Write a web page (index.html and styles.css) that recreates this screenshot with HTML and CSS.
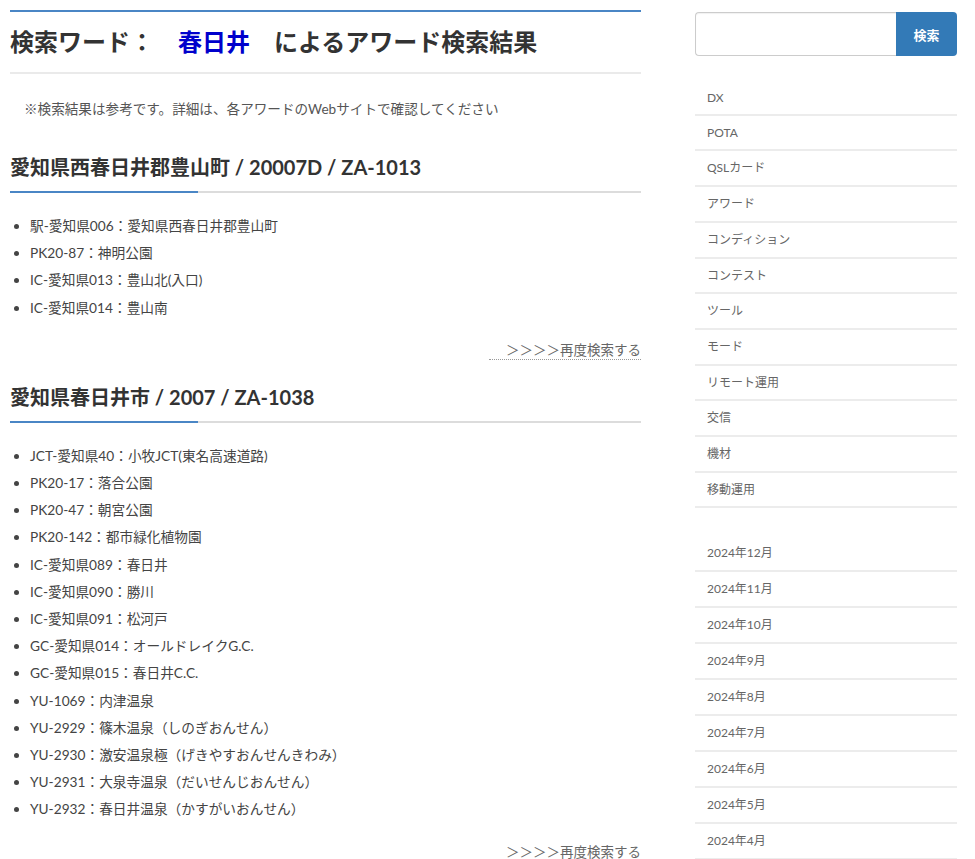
FILE: index.html
```html
<!DOCTYPE html>
<html lang="ja">
<head>
<meta charset="utf-8">
<title>アワード検索結果</title>
<link rel="stylesheet" href="styles.css">
</head>
<body>
<div class="page">
  <main class="main">
    <h1 class="title">検索ワード：　<span class="word">春日井</span>　によるアワード検索結果</h1>
    <p class="note">※検索結果は参考です。詳細は、各アワードのWebサイトで確認してください</p>

    <section class="result">
      <h2 class="result-title">愛知県西春日井郡豊山町 / 20007D / ZA-1013</h2>
      <ul class="items">
        <li>駅-愛知県006：愛知県西春日井郡豊山町</li>
        <li>PK20-87：神明公園</li>
        <li>IC-愛知県013：豊山北(入口)</li>
        <li>IC-愛知県014：豊山南</li>
      </ul>
      <div class="again"><a class="again-link" href="#">＞＞＞＞再度検索する</a></div>
    </section>

    <section class="result">
      <h2 class="result-title">愛知県春日井市 / 2007 / ZA-1038</h2>
      <ul class="items">
        <li>JCT-愛知県40：小牧JCT(東名高速道路)</li>
        <li>PK20-17：落合公園</li>
        <li>PK20-47：朝宮公園</li>
        <li>PK20-142：都市緑化植物園</li>
        <li>IC-愛知県089：春日井</li>
        <li>IC-愛知県090：勝川</li>
        <li>IC-愛知県091：松河戸</li>
        <li>GC-愛知県014：オールドレイクG.C.</li>
        <li>GC-愛知県015：春日井C.C.</li>
        <li>YU-1069：内津温泉</li>
        <li>YU-2929：篠木温泉（しのぎおんせん）</li>
        <li>YU-2930：激安温泉極（げきやすおんせんきわみ）</li>
        <li>YU-2931：大泉寺温泉（だいせんじおんせん）</li>
        <li>YU-2932：春日井温泉（かすがいおんせん）</li>
      </ul>
      <div class="again"><a class="again-link" href="#">＞＞＞＞再度検索する</a></div>
    </section>
  </main>

  <aside class="sidebar">
    <form class="search">
      <input class="search-input" type="text">
      <button class="search-btn" type="button">検索</button>
    </form>
    <ul class="menu">
      <li><a href="#">DX</a></li>
      <li><a href="#">POTA</a></li>
      <li><a href="#">QSLカード</a></li>
      <li><a href="#">アワード</a></li>
      <li><a href="#">コンディション</a></li>
      <li><a href="#">コンテスト</a></li>
      <li><a href="#">ツール</a></li>
      <li><a href="#">モード</a></li>
      <li><a href="#">リモート運用</a></li>
      <li><a href="#">交信</a></li>
      <li><a href="#">機材</a></li>
      <li><a href="#">移動運用</a></li>
    </ul>
    <ul class="menu archive">
      <li><a href="#">2024年12月</a></li>
      <li><a href="#">2024年11月</a></li>
      <li><a href="#">2024年10月</a></li>
      <li><a href="#">2024年9月</a></li>
      <li><a href="#">2024年8月</a></li>
      <li><a href="#">2024年7月</a></li>
      <li><a href="#">2024年6月</a></li>
      <li><a href="#">2024年5月</a></li>
      <li><a href="#">2024年4月</a></li>
    </ul>
  </aside>
</div>
</body>
</html>
```

FILE: styles.css
```css
* { box-sizing: border-box; }

body {
  margin: 0;
  background: #fff;
  color: #333;
  font-family: Lato, "Noto Sans CJK JP", sans-serif;
}

.page {
  display: flex;
  align-items: flex-start;
  gap: 54px;
  padding: 10px 0 0 10px;
}

.main {
  width: 631px;
  flex: none;
}

.title {
  margin: 0;
  padding: 12px 0;
  font-size: 24px;
  line-height: 36px;
  font-weight: 700;
  color: #333;
  border-top: 2px solid #4a86c5;
  border-bottom: 2px solid #eaeaea;
}

.word { color: #0000cc; }

.note {
  margin: 25px 0 0;
  padding-left: 14px;
  font-size: 13.6px;
  line-height: 20px;
  color: #555;
}

.result { margin-top: 33px; }
.result + .result { margin-top: 22px; }

.result-title {
  margin: 0;
  font-size: 20px;
  line-height: 30px;
  font-weight: 700;
  color: #333;
  background:
    linear-gradient(#4a86c5, #4a86c5) left bottom / 188px 2px no-repeat,
    linear-gradient(#dcdcdc, #dcdcdc) left bottom / 100% 2px no-repeat;
  padding-bottom: 11px;
}

.items {
  margin: 19px 0 0;
  padding-left: 20px;
  list-style: disc;
}

.items li {
  font-size: 13.7px;
  line-height: 27.2px;
  color: #444;
}

.again {
  margin-top: 18px;
  text-align: right;
  line-height: 20px;
}

.again-link {
  display: inline-block;
  padding-left: 17px;
  font-size: 13.5px;
  line-height: 18px;
  color: #666;
  text-decoration: none;
  border-bottom: 1px dotted #999;
}

.sidebar {
  width: 262px;
  flex: none;
  padding-top: 2px;
}

.search {
  display: flex;
  height: 44px;
  margin: 0;
}

.search-input {
  flex: 1;
  min-width: 0;
  margin: 0;
  border: 1px solid #ccc;
  border-right: none;
  border-radius: 4px 0 0 4px;
  box-shadow: inset 0 1px 1px rgba(0,0,0,0.06);
  background: #fff;
}

.search-btn {
  width: 61px;
  margin: 0;
  border: none;
  border-radius: 0 4px 4px 0;
  background: #337ab7;
  color: #fff;
  font-family: Lato, "Noto Sans CJK JP", sans-serif;
  font-size: 13px;
  font-weight: 700;
}

.menu {
  margin: 24px 0 0;
  padding: 0;
  list-style: none;
}

.menu li {
  border-bottom: 2px solid #ececec;
}

.menu a {
  display: block;
  padding: 0 12px;
  font-size: 12px;
  line-height: 33.7px;
  color: #666;
  text-decoration: none;
}

.menu li:first-child a {
  padding-top: 3px;
  line-height: 30.7px;
}

.archive { margin-top: 28px; }
.archive li:first-child a {
  padding-top: 0;
  line-height: 33.9px;
}
.archive a { line-height: 33.9px; }
```
